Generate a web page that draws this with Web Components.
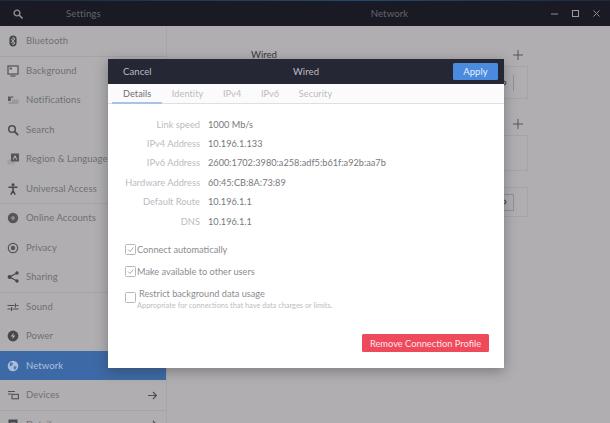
<!DOCTYPE html>
<html>
<head>
<meta charset="utf-8">
<style>
  html, body { margin: 0; padding: 0; height: 100%; overflow: hidden; background: #b0aeb1; }
  body { font-family: Lato, "Liberation Sans", sans-serif; }
</style>
</head>
<body>
<settings-window>
  <side-item icon="bluetooth">Bluetooth</side-item>
  <side-item icon="background" rule>Background</side-item>
  <side-item icon="bell">Notifications</side-item>
  <side-item icon="search">Search</side-item>
  <side-item icon="region">Region &amp; Language</side-item>
  <side-item icon="access">Universal Access</side-item>
  <side-item icon="accounts" rule>Online Accounts</side-item>
  <side-item icon="privacy">Privacy</side-item>
  <side-item icon="sharing">Sharing</side-item>
  <side-item icon="sound" rule>Sound</side-item>
  <side-item icon="power">Power</side-item>
  <side-item icon="globe" active>Network</side-item>
  <side-item icon="devices" arrow>Devices</side-item>
  <side-item icon="details" arrow rule>Details</side-item>
  <wired-dialog slot="dialog">
    <info-row label="Link speed">1000 Mb/s</info-row>
    <info-row label="IPv4 Address">10.196.1.133</info-row>
    <info-row label="IPv6 Address">2600:1702:3980:a258:adf5:b61f:a92b:aa7b</info-row>
    <info-row label="Hardware Address">60:45:CB:8A:73:89</info-row>
    <info-row label="Default Route">10.196.1.1</info-row>
    <info-row label="DNS">10.196.1.1</info-row>
  </wired-dialog>
</settings-window>
<script>
const ICONS = {
  bluetooth: '<rect x="2.4" y=".6" width="7.2" height="10.8" rx="3.6" fill="#47474e"/><path d="M4 4l4 4-2 1.8V2.2L8 4 4 8" fill="none" stroke="#b5b4b7" stroke-width=".8"/>',
  background: '<rect x="1" y="1" width="10" height="8" fill="#b9b8bb" stroke="#5e5e65" stroke-width="1.4"/><path d="M3.5 11h5" stroke="#5e5e65" stroke-width="1.4"/><path d="M2.5 2.5h2.5v2H2.5z" fill="#5e5e65"/>',
  bell: '<path d="M1 2.5h2.8V7H1z" fill="#5a5a60"/><circle cx="5.2" cy="3" r="1.3" fill="#7d7c82"/><path d="M5 5.5h6.5V10H1.5V8H5z" fill="#9a999d"/>',
  search: '<circle cx="5" cy="5" r="3.3" fill="none" stroke="#4d4d54" stroke-width="1.5"/><path d="M7.5 7.5l3.7 3.7" stroke="#4d4d54" stroke-width="1.8"/>',
  region: '<path d="M.5 6.5h7v5h-7z" fill="#a09fa3"/><path d="M4 .5h8v8H4z" fill="#55555c"/><path d="M6.3 6.5L8 2.8l1.7 3.7" fill="none" stroke="#c0bfc2" stroke-width="1"/>',
  access: '<circle cx="6" cy="1.8" r="1.5" fill="#47474e"/><path d="M1.5 4.3h9M6 4v3.8M6 7.6l-2.2 4M6 7.6l2.2 4" fill="none" stroke="#47474e" stroke-width="1.5"/>',
  accounts: '<circle cx="6" cy="6" r="5.2" fill="#56565d"/><circle cx="6" cy="6" r="2.3" fill="#8f8e93" stroke="#47474e" stroke-width=".6"/>',
  privacy: '<circle cx="6" cy="6" r="4.7" fill="none" stroke="#56565d" stroke-width="1.2"/><circle cx="6" cy="6" r="2.2" fill="#56565d"/>',
  sharing: '<path d="M10 2L2.5 6l7.5 4" fill="none" stroke="#47474e" stroke-width="1.2"/><circle cx="2.6" cy="6" r="2" fill="#47474e"/><circle cx="10" cy="2" r="1.7" fill="#47474e"/><circle cx="10" cy="10" r="1.7" fill="#47474e"/>',
  sound: '<path d="M.5 4.5h7M9.5 4.5h2M.5 8h3M5.5 8h6M8.5 2.5v4M4.5 6v4" fill="none" stroke="#4d4d54" stroke-width="1.1"/>',
  power: '<circle cx="6" cy="6" r="5.4" fill="#47474e"/><path d="M7 2.8L3.6 6.6H6l-.8 2.6 3.2-3.8H6z" fill="#b5b4b7"/>',
  globe: '<circle cx="6" cy="6" r="5.3" fill="#a9bdd6"/><path d="M3 2.2l3 .8-.8 2.4-2.6.8zM6.8 6l3 .8-1.6 3-1.4-.8z" fill="#4d78ad"/>',
  devices: '<path d="M1 2.5h7M1 5h3.6" stroke="#505057" stroke-width="1"/><rect x="5" y="5.4" width="6.4" height="4.4" fill="none" stroke="#505057" stroke-width="1.1"/>',
  details: '<rect x="1.5" y=".5" width="9" height="10" fill="#47474e"/><path d="M3.5 4h5M3.5 7h5" stroke="#b0aeb1" stroke-width="1"/>'
};

const PLUS = '<svg class="plus" viewBox="0 0 10 10"><path d="M5 0v10M0 5h10" stroke="#55555b" stroke-width="1"/></svg>';
const GEAR = '<svg class="gear" viewBox="0 0 8 8"><circle cx="4" cy="4" r="2.2" fill="none" stroke="#55555b" stroke-width="1.6"/><path d="M4 .3v1.4M4 6.3v1.4M.3 4h1.4M6.3 4h1.4M1.4 1.4l1 1M5.6 5.6l1 1M6.6 1.4l-1 1M2.4 5.6l-1 1" stroke="#55555b" stroke-width=".9"/></svg>';

class SideItem extends HTMLElement {
  connectedCallback() {
    const active = this.hasAttribute('active');
    const root = this.attachShadow({ mode: 'open' });
    root.innerHTML = `<style>
      :host { display: flex; align-items: center; height: 29.5px; flex: none; box-sizing: border-box;
        padding: 0 9px 0 7px; gap: 7px; font-size: 9.5px; letter-spacing: .1px;
        color: ${active ? '#aac1dd' : '#6f6e74'};
        background: ${active ? '#3d6aa6' : 'transparent'};
        border-top: 1px solid ${this.hasAttribute('rule') ? '#a5a3a7' : 'transparent'}; }
      svg { width: 12px; height: 12px; flex: none; }
      span { flex: 1; white-space: nowrap; margin-top: -1px; }
      .arrow { width: 9px; height: 9px; }
    </style>
    <svg viewBox="0 0 12 12">${ICONS[this.getAttribute('icon')]}</svg>
    <span><slot></slot></span>
    ${this.hasAttribute('arrow') ? '<svg class="arrow" viewBox="0 0 9 9"><path d="M0 4.5h8M5 1l3.4 3.5L5 8" fill="none" stroke="#4d4d54" stroke-width="1.2"/></svg>' : ''}`;
  }
}

class SettingsWindow extends HTMLElement {
  constructor() {
    super();
    const root = this.attachShadow({ mode: 'open' });
    root.innerHTML = `<style>
      :host { display: flex; flex-direction: column; position: relative; width: 610px; height: 423px; overflow: hidden; background: #b0aeb1; }
      .strip { height: 1px; flex: none; background: linear-gradient(90deg,#1c2a3d,#22496f 60%,#1c2a3d); }
      header { height: 25px; flex: none; display: flex; align-items: center; background: #191a24; color: #64646b; font-size: 9.6px; letter-spacing: .1px; }
      .left { width: 167px; flex: none; display: flex; align-items: center; gap: 43px; padding-left: 13px; box-sizing: border-box; }
      .left svg { width: 10px; height: 10px; }
      .title { flex: 1; text-align: center; padding-left: 2px; }
      .controls { display: flex; align-items: center; justify-content: flex-end; gap: 12px; width: 64px; box-sizing: border-box; padding-right: 9px; margin-left: -64px; }
      .controls svg { width: 9px; height: 9px; }
      .body { flex: 1; display: flex; min-height: 0; }
      nav { width: 167px; flex: none; display: flex; flex-direction: column; border-right: 1px solid #a8a6aa; box-sizing: border-box; }
      main { flex: 1; display: flex; flex-direction: column; padding: 21px 0 0 84px; box-sizing: border-box; color: #38383e; font-size: 9.6px; }
      .head { display: flex; justify-content: space-between; width: 277px; height: 14px; align-items: center; margin-bottom: 5px; }
      .plus { width: 10px; height: 10px; margin: 2px 5px 0 0; }
      .box { width: 277px; box-sizing: border-box; border: 1px solid #a6a4a8; display: flex; align-items: center; justify-content: flex-end; padding-right: 13px; gap: 6px; flex: none; }
      .gear { width: 6px; height: 8px; }
      .sep { width: 1px; height: 16px; background: #929095; }
      .btn { width: 26px; height: 17px; box-sizing: border-box; border: 1px solid #929095; display: flex; align-items: center; justify-content: flex-end; padding-right: 6px; }
      ::slotted(wired-dialog) { position: absolute; left: 108px; top: 59px; }
    </style>
    <div class="strip"></div>
    <header>
      <div class="left"><svg viewBox="0 0 10 10"><circle cx="4" cy="4" r="2.9" fill="none" stroke="#8d8d94" stroke-width="1.4"/><path d="M6 6l3.5 3.5" stroke="#8d8d94" stroke-width="1.6"/></svg><span>Settings</span></div>
      <div class="title">Network</div>
      <div class="controls">
        <svg viewBox="0 0 9 9"><path d="M1 5h7" stroke="#8d8d94" stroke-width="1"/></svg>
        <svg viewBox="0 0 9 9"><rect x="1.5" y="1.5" width="6" height="6" fill="none" stroke="#9a9aa0" stroke-width="1"/></svg>
        <svg viewBox="0 0 9 9"><path d="M1.5 1.5l6 6M7.5 1.5l-6 6" stroke="#8d8d94" stroke-width="1"/></svg>
      </div>
    </header>
    <div class="body">
      <nav><slot></slot></nav>
      <main>
        <div class="head"><span>Wired</span>${PLUS}</div>
        <div class="box" style="height:33px">${GEAR}<div class="sep"></div></div>
        <div class="head" style="margin-top:17px"><span></span>${PLUS}</div>
        <div class="box" style="height:36px"></div>
        <div class="box" style="height:30px;margin-top:16px"><div class="btn">${GEAR}</div></div>
      </main>
    </div>
    <slot name="dialog"></slot>`;
  }
}

class InfoRow extends HTMLElement {
  constructor() {
    super();
    this.attachShadow({ mode: 'open' });
  }
  connectedCallback() {
    this.shadowRoot.innerHTML = `<style>
      :host { display: flex; height: 19.45px; align-items: center; gap: 8px; font-size: 9.3px; white-space: nowrap; }
      .k { width: 77px; text-align: right; color: #bbbbbf; flex: none; }
      .v { color: #77777c; font-size: 9.2px; }
    </style>
    <span class="k">${this.getAttribute('label')}</span><span class="v"><slot></slot></span>`;
  }
}

class CheckOption extends HTMLElement {
  constructor() {
    super();
    const checked = this.hasAttribute('checked');
    const root = this.attachShadow({ mode: 'open' });
    root.innerHTML = `<style>
      :host { display: flex; align-items: center; gap: 1px; font-size: 9.2px; color: #8c8c91; white-space: nowrap; height: 11px; }
      i { display: block; width: 9px; height: 9px; border: 1px solid #b7b7bb; border-radius: 1.5px; flex: none; }
      svg { display: block; width: 9px; height: 9px; }
    </style>
    <i>${checked ? '<svg viewBox="0 0 9 9"><path d="M2 4.5l2 2 3.4-4" fill="none" stroke="#a9a9ae" stroke-width="1"/></svg>' : ''}</i>
    <span><slot></slot></span>`;
  }
}

class WiredDialog extends HTMLElement {
  constructor() {
    super();
    const root = this.attachShadow({ mode: 'open' });
    root.innerHTML = `<style>
      :host { display: flex; flex-direction: column; width: 396px; height: 309px; background: #fff; box-shadow: 0 3px 12px rgba(40,40,45,.4); box-sizing: border-box; }
      header { height: 25px; flex: none; display: flex; align-items: center; justify-content: space-between; position: relative; background: #262735; color: #bdbdc3; font-size: 9.5px; letter-spacing: .1px; padding: 0 6px 0 15px; }
      .t { position: absolute; left: 0; right: 0; text-align: center; }
      .apply { position: relative; background: #4a8bdf; color: #e8f0fb; width: 45px; height: 17px; border-radius: 1.5px; display: flex; align-items: center; justify-content: center; }
      .tabs { height: 19px; flex: none; display: flex; padding-left: 4px; background: #fbfafc; border-bottom: 1px solid #dfdfe2; font-size: 9.1px; letter-spacing: .1px; color: #bcbcc1; align-items: stretch; }
      .tabs span { display: flex; align-items: center; padding: 0 9.8px; box-sizing: border-box; }
      .tabs .on { color: #6e6e74; border-bottom: 2px solid #a8c4e2; margin-bottom: -1px; width: 50px; padding: 0 0 0 11px; }
      .info { padding: 10.3px 0 0 15px; }
      .opts { display: flex; flex-direction: column; padding: 13px 0 0 17px; gap: 11px; }
      .restrict { display: flex; flex-direction: column; margin-top: 4px; }
      .restrict small { display: block; font-size: 7.4px; line-height: 9px; color: #bdbdc1; margin: -2px 0 0 12px; white-space: nowrap; }
      .r b { font-weight: normal; margin-left: 2px; position: relative; top: -4px; }
      .foot { margin-top: auto; display: flex; justify-content: flex-end; padding: 0 15px 16px 0; }
      .remove { width: 127px; height: 18px; background: #ef4a5c; color: #fbe5e7; font-size: 9.3px; border-radius: 1.5px; display: flex; align-items: center; justify-content: center; }
    </style>
    <header><span>Cancel</span><span class="t">Wired</span><span class="apply">Apply</span></header>
    <div class="tabs"><span class="on">Details</span><span>Identity</span><span>IPv4</span><span>IPv6</span><span>Security</span></div>
    <div class="info"><slot></slot></div>
    <div class="opts">
      <check-option checked>Connect automatically</check-option>
      <check-option checked>Make available to other users</check-option>
      <div class="restrict">
        <check-option class="r"><b>Restrict background data usage</b></check-option>
        <small>Appropriate for connections that have data charges or limits.</small>
      </div>
    </div>
    <div class="foot"><span class="remove">Remove Connection Profile</span></div>`;
  }
}

customElements.define('side-item', SideItem);
customElements.define('settings-window', SettingsWindow);
customElements.define('info-row', InfoRow);
customElements.define('check-option', CheckOption);
customElements.define('wired-dialog', WiredDialog);
</script>
</body>
</html>
